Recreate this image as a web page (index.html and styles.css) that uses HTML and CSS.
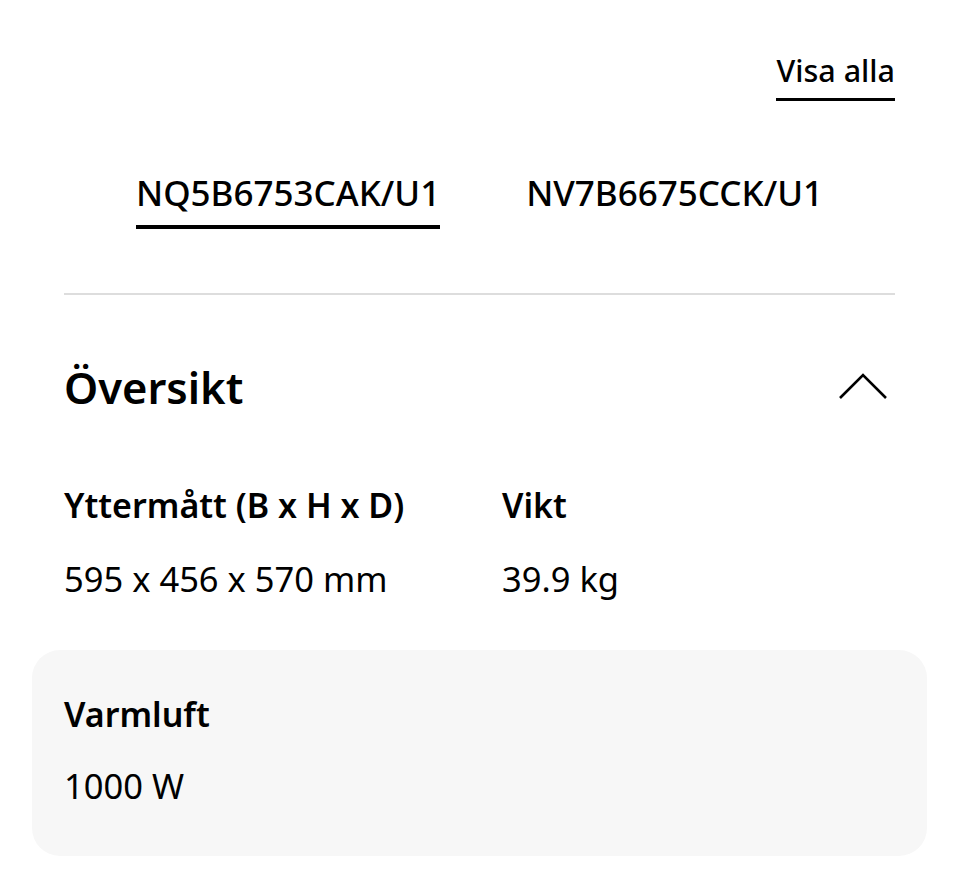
FILE: index.html
```html
<!DOCTYPE html>
<html lang="sv">
<head>
    <meta charset="UTF-8">
    <meta name="viewport" content="width=device-width, initial-scale=1.0">
    <title>Specifikationer</title>
    <link rel="stylesheet" href="styles.css">
</head>
<body>
    <div class="page">
        <!-- Visa alla -->
        <div class="top-bar">
            <a href="#" class="see-all">Visa alla</a>
        </div>

        <!-- Modellflikar -->
        <div class="tabs">
            <a href="#" class="tab active">NQ5B6753CAK/U1</a>
            <a href="#" class="tab">NV7B6675CCK/U1</a>
        </div>

        <hr class="divider">

        <!-- Översikt -->
        <div class="section-head">
            <h2>Översikt</h2>
            <svg class="chevron" width="50" height="28" viewBox="0 0 50 28">
                <polyline points="2,25 25,2 48,25" fill="none" stroke="#000" stroke-width="2.6"/>
            </svg>
        </div>

        <div class="spec-grid">
            <div class="spec">
                <div class="spec-label">Yttermått (B x H x D)</div>
                <div class="spec-value">595 x 456 x 570 mm</div>
            </div>
            <div class="spec">
                <div class="spec-label">Vikt</div>
                <div class="spec-value">39.9 kg</div>
            </div>
        </div>

        <div class="spec-card">
            <div class="spec-label">Varmluft</div>
            <div class="spec-value">1000 W</div>
        </div>
    </div>
</body>
</html>
```

FILE: styles.css
```css
body {
    margin: 0;
    font-family: "Noto Sans", Arial, sans-serif;
    color: #000;
    background-color: #fff;
}

.page {
    padding: 0 65px 0 64px;
}

/* Visa alla */
.top-bar {
    display: flex;
    justify-content: flex-end;
    padding-top: 52px;
}
.see-all {
    color: #000;
    text-decoration: none;
    font-size: 30.5px;
    font-weight: 500;
    line-height: 36px;
    padding-bottom: 10px;
    border-bottom: 3px solid #000;
}

/* Flikar */
.tabs {
    display: flex;
    justify-content: center;
    gap: 86px;
    margin-top: 70px;
}
.tab {
    color: #000;
    text-decoration: none;
    font-size: 35px;
    font-weight: 500;
    line-height: 44px;
    padding-bottom: 10px;
    border-bottom: 4px solid transparent;
}
.tab.active {
    border-bottom-color: #000;
}

.divider {
    margin: 64px 0 0;
    border: none;
    height: 2px;
    background-color: #ddd;
}

/* Översikt */
.section-head {
    display: flex;
    justify-content: space-between;
    align-items: center;
    margin-top: 66px;
}
.section-head h2 {
    margin: 0;
    font-size: 43.5px;
    font-weight: 600;
    line-height: 52px;
}
.chevron {
    margin-right: 7px;
}

.spec-grid {
    display: grid;
    grid-template-columns: 438px 1fr;
    margin-top: 70px;
}
.spec-label {
    font-size: 34px;
    font-weight: 600;
    line-height: 44px;
}
.spec-value {
    font-size: 34.5px;
    font-weight: 400;
    line-height: 44px;
    margin-top: 30px;
}

.spec-card {
    background-color: #f7f7f7;
    border-radius: 28px;
    margin: 49px -32px 0 -32px;
    padding: 42px 32px 48px;
}
.spec-card .spec-value {
    margin-top: 28px;
}
```
